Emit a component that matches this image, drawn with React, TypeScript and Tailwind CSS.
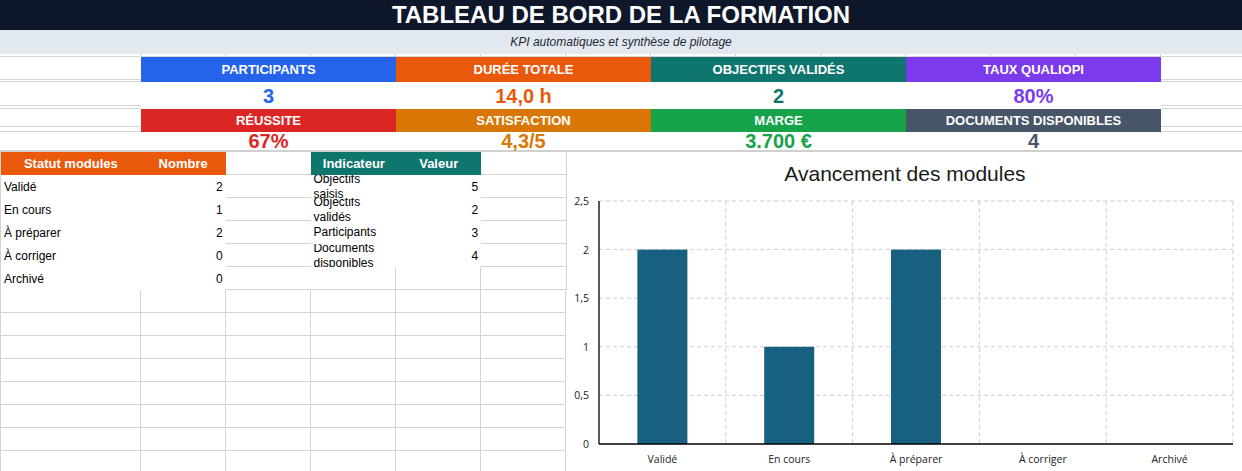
const line = "border-[#d4d4d4]";

const kpis = [
  { label: "PARTICIPANTS", value: "3", bg: "bg-[#2563eb]", fg: "text-[#2563eb]" },
  { label: "DURÉE TOTALE", value: "14,0 h", bg: "bg-[#ea580c]", fg: "text-[#ea580c]" },
  { label: "OBJECTIFS VALIDÉS", value: "2", bg: "bg-[#0f766e]", fg: "text-[#0f766e]" },
  { label: "TAUX QUALIOPI", value: "80%", bg: "bg-[#7c3aed]", fg: "text-[#7c3aed]" },
];

const kpis2 = [
  { label: "RÉUSSITE", value: "67%", bg: "bg-[#dc2626]", fg: "text-[#dc2626]" },
  { label: "SATISFACTION", value: "4,3/5", bg: "bg-[#d97706]", fg: "text-[#d97706]" },
  { label: "MARGE", value: "3.700 €", bg: "bg-[#16a34a]", fg: "text-[#16a34a]" },
  { label: "DOCUMENTS DISPONIBLES", value: "4", bg: "bg-[#475569]", fg: "text-[#475569]" },
];

const modules = [
  { name: "Validé", n: 2 },
  { name: "En cours", n: 1 },
  { name: "À préparer", n: 2 },
  { name: "À corriger", n: 0 },
  { name: "Archivé", n: 0 },
];

const indicateurs = [
  { name: "Objectifs saisis", v: 5 },
  { name: "Objectifs validés", v: 2 },
  { name: "Participants", v: 3 },
  { name: "Documents disponibles", v: 4 },
];

// side cell of the KPI block, with the doubled grid lines the sheet shows
function SideCell({ h, gap }: { h: string; gap: string }) {
  return (
    <div className={`${h} border-b ${line} flex flex-col justify-end bg-white`}>
      <div className={`${gap} border-b ${line}`} />
    </div>
  );
}

function KpiRow({ items, labelH, valueH, gapL, gapV }: { items: typeof kpis; labelH: string; valueH: string; gapL: string; gapV: string }) {
  return (
    <>
      <div className="flex">
        <div className="w-[141px] shrink-0">
          <SideCell h={labelH} gap={gapL} />
        </div>
        {items.map((k) => (
          <div key={k.label} className={`w-[255px] shrink-0 ${labelH} ${k.bg} flex items-center justify-center text-[13px] font-bold text-white`}>
            {k.label}
          </div>
        ))}
        <div className="flex-1">
          <SideCell h={labelH} gap={gapL} />
        </div>
      </div>
      <div className="flex">
        <div className="w-[141px] shrink-0">
          {gapV ? <SideCell h={valueH} gap={gapV} /> : <div className={`${valueH} bg-white`} />}
        </div>
        {items.map((k) => (
          <div key={k.label} className={`w-[255px] shrink-0 ${valueH} bg-white flex items-center justify-center text-[20px] leading-none font-bold ${k.fg}`}>
            {k.value}
          </div>
        ))}
        <div className="flex-1">
          {gapV ? <SideCell h={valueH} gap={gapV} /> : <div className={`${valueH} bg-white`} />}
        </div>
      </div>
    </>
  );
}

function Chart() {
  const left = 32;
  const right = 666;
  const top = 49;
  const bottom = 292;
  const step = (right - left) / 5;
  const y = (v: number) => bottom - v * ((bottom - top) / 2.5);
  const ticks = [2.5, 2, 1.5, 1, 0.5, 0];
  return (
    <svg width="675" height="319" className="block">
      <text x="338" y="29" textAnchor="middle" fontSize="21" fill="#1a1a1a" fontFamily="'Liberation Sans', Arial, sans-serif">
        Avancement des modules
      </text>
      {ticks.slice(0, 5).map((t) => (
        <line key={t} x1={left} x2={right} y1={y(t)} y2={y(t)} stroke="#cfcfcf" strokeDasharray="4 3" />
      ))}
      {[1, 2, 3, 4, 5].map((i) => (
        <line key={i} x1={left + i * step} x2={left + i * step} y1={top} y2={bottom} stroke="#cfcfcf" strokeDasharray="4 3" />
      ))}
      {modules.map((m, i) =>
        m.n > 0 ? (
          <rect key={m.name} x={left + i * step + 38.4} y={y(m.n)} width="50" height={bottom - y(m.n)} fill="#17607f" />
        ) : null
      )}
      <line x1={left} x2={left} y1={top} y2={bottom} stroke="#000" strokeWidth="1.3" />
      <line x1={left} x2={right} y1={bottom} y2={bottom} stroke="#000" strokeWidth="1.3" />
      {ticks.map((t) => (
        <text key={t} x="22" y={y(t) + 4} textAnchor="end" fontSize="10.5" fill="#222" fontFamily="'Open Sans', sans-serif">
          {String(t).replace(".", ",")}
        </text>
      ))}
      {modules.map((m, i) => (
        <text key={m.name} x={left + i * step + step / 2} y="311" textAnchor="middle" fontSize="10.5" fill="#222" fontFamily="'Open Sans', sans-serif">
          {m.name}
        </text>
      ))}
    </svg>
  );
}

export default function App() {
  const cols = ["w-[141px]", "w-[85px]", "w-[85px]", "w-[85px]", "w-[85px]", "w-[85px]"];
  const emptyRows = Array.from({ length: 8 });

  return (
    <div className="w-[1242px] h-[471px] overflow-hidden bg-white font-['Liberation_Sans',Arial,sans-serif] text-black">
      {/* title */}
      <div className="h-[30px] bg-[#0f172a] flex items-center justify-center text-[24px] font-bold text-white">
        TABLEAU DE BORD DE LA FORMATION
      </div>
      <div className="h-[24px] bg-[#e2e8f0] flex items-center justify-center text-[12px] italic text-[#1f2937]">
        KPI automatiques et synthèse de pilotage
      </div>
      {/* thin spacer row */}
      <div className={`h-[3px] flex border-b ${line}`}>
        <div className={`w-[141px] shrink-0 border-r ${line}`} />
        {Array.from({ length: 13 }).map((_, i) => (
          <div key={i} className={`w-[85px] shrink-0 border-r ${line}`} />
        ))}
      </div>

      {/* KPI block */}
      <KpiRow items={kpis} labelH="h-[25px]" valueH="h-[27px]" gapL="mb-[1px]" gapV="mb-[2px]" />
      <KpiRow items={kpis2} labelH="h-[23px]" valueH="h-[18px]" gapL="mb-[4px]" gapV="" />
      <div className="h-[2px] bg-[#d0d0d0]" />

      {/* tables + chart */}
      <div className="flex h-[319px]">
        <div className={`w-[567px] shrink-0 border-l ${line}`}>
          {/* header row */}
          <div className="flex h-[23px]">
            <div className="w-[140px] bg-[#ea580c] flex items-center justify-center text-[13px] font-bold text-white">Statut modules</div>
            <div className="w-[85px] bg-[#ea580c] flex items-center justify-center text-[13px] font-bold text-white">Nombre</div>
            <div className={`w-[86px] border-b ${line}`} />
            <div className="w-[85px] bg-[#0f766e] flex items-center justify-center text-[13px] font-bold text-white">Indicateur</div>
            <div className="w-[85px] bg-[#0f766e] flex items-center justify-center text-[13px] font-bold text-white">Valeur</div>
            <div className={`w-[86px] border-b border-r ${line}`} />
          </div>
          {/* data rows */}
          {modules.map((m, i) => {
            const ind = indicateurs[i];
            return (
              <div key={m.name} className="flex h-[23px] text-[12px]">
                <div className="w-[140px] flex items-center pl-[3px] bg-white">{m.name}</div>
                <div className="w-[85px] flex items-center justify-end pr-[3px] bg-white">{m.n}</div>
                <div className={`w-[86px] border-b ${line}`} />
                {ind ? (
                  <>
                    <div className="w-[85px] h-[23px] overflow-hidden flex items-center pl-[2px] bg-white">
                      <span className="block w-[70px] leading-[15px]">{ind.name}</span>
                    </div>
                    <div className="w-[85px] flex items-center justify-end pr-[3px] bg-white">{ind.v}</div>
                  </>
                ) : (
                  <>
                    <div className={`w-[85px] border-r border-b ${line}`} />
                    <div className={`w-[85px] border-r border-b ${line}`} />
                  </>
                )}
                <div className={`w-[86px] border-b border-r ${line}`} />
              </div>
            );
          })}
          {/* plain sheet rows */}
          {emptyRows.map((_, r) => (
            <div key={r} className="flex h-[23px]">
              {cols.map((w, c) => (
                <div key={c} className={`${c === 0 ? "w-[140px]" : w} shrink-0 border-r border-b ${line}`} />
              ))}
            </div>
          ))}
        </div>
        <div className="flex-1 bg-white">
          <Chart />
        </div>
      </div>
    </div>
  );
}
